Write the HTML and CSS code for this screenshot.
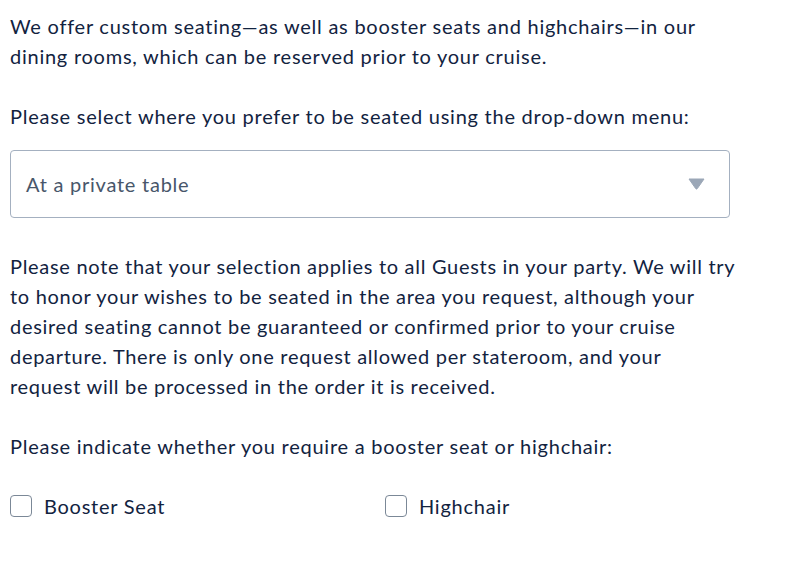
FILE: index.html
```html
<!DOCTYPE html>
<html lang="en">
<head>
<meta charset="utf-8">
<link rel="stylesheet" href="styles.css">
</head>
<body>
<div class="form">
  <p class="text">We offer custom seating—as well as booster seats and highchairs—in our dining rooms, which can be reserved prior to your cruise.</p>
  <p class="text intro">Please select where you prefer to be seated using the drop-down menu:</p>
  <div class="select">
    <span class="select-value">At a private table</span>
    <svg class="caret" width="17" height="12" viewBox="0 0 17 12"><path d="M1 1 H16 L9.3 10.6 Q8.5 11.6 7.7 10.6 Z" fill="#9ba7b7" stroke="#9ba7b7" stroke-width="1" stroke-linejoin="round"/></svg>
  </div>
  <p class="text note">Please note that your selection applies to all Guests in your party. We will try<br>to honor your wishes to be seated in the area you request, although your<br>desired seating cannot be guaranteed or confirmed prior to your cruise<br>departure. There is only one request allowed per stateroom, and your<br>request will be processed in the order it is received.</p>
  <p class="text">Please indicate whether you require a booster seat or highchair:</p>
  <div class="checks">
    <label class="check"><span class="box"></span><span>Booster Seat</span></label>
    <label class="check"><span class="box"></span><span>Highchair</span></label>
  </div>
</div>
</body>
</html>
```
FILE: styles.css
```css
html, body {
  margin: 0;
  padding: 0;
  background: #ffffff;
}
body {
  font-family: Lato, "Open Sans", sans-serif;
  color: #12233f;
  font-size: 20px;
  letter-spacing: 0.75px;
  line-height: 30px;
}
.form {
  width: 720px;
  padding: 11px 0 0 10px;
}
.text {
  margin: 0 0 30px 0;
}
.text.intro {
  margin-bottom: 19px;
}
.note {
  white-space: nowrap;
  letter-spacing: 0.7px;
}
.select {
  box-sizing: border-box;
  height: 68px;
  border: 1px solid #a4b0c0;
  border-radius: 4px;
  display: flex;
  align-items: center;
  justify-content: space-between;
  padding: 0 24px 0 15px;
  margin-bottom: 33px;
}
.select-value {
  color: #48566a;
}
.caret {
  display: block;
}
.checks {
  display: grid;
  grid-template-columns: 375px 1fr;
  margin-top: 28px;
}
.check {
  display: flex;
  align-items: center;
  gap: 12px;
}
.box {
  box-sizing: border-box;
  width: 22px;
  height: 22px;
  border: 1px solid #7b8897;
  border-radius: 4px;
}
```
